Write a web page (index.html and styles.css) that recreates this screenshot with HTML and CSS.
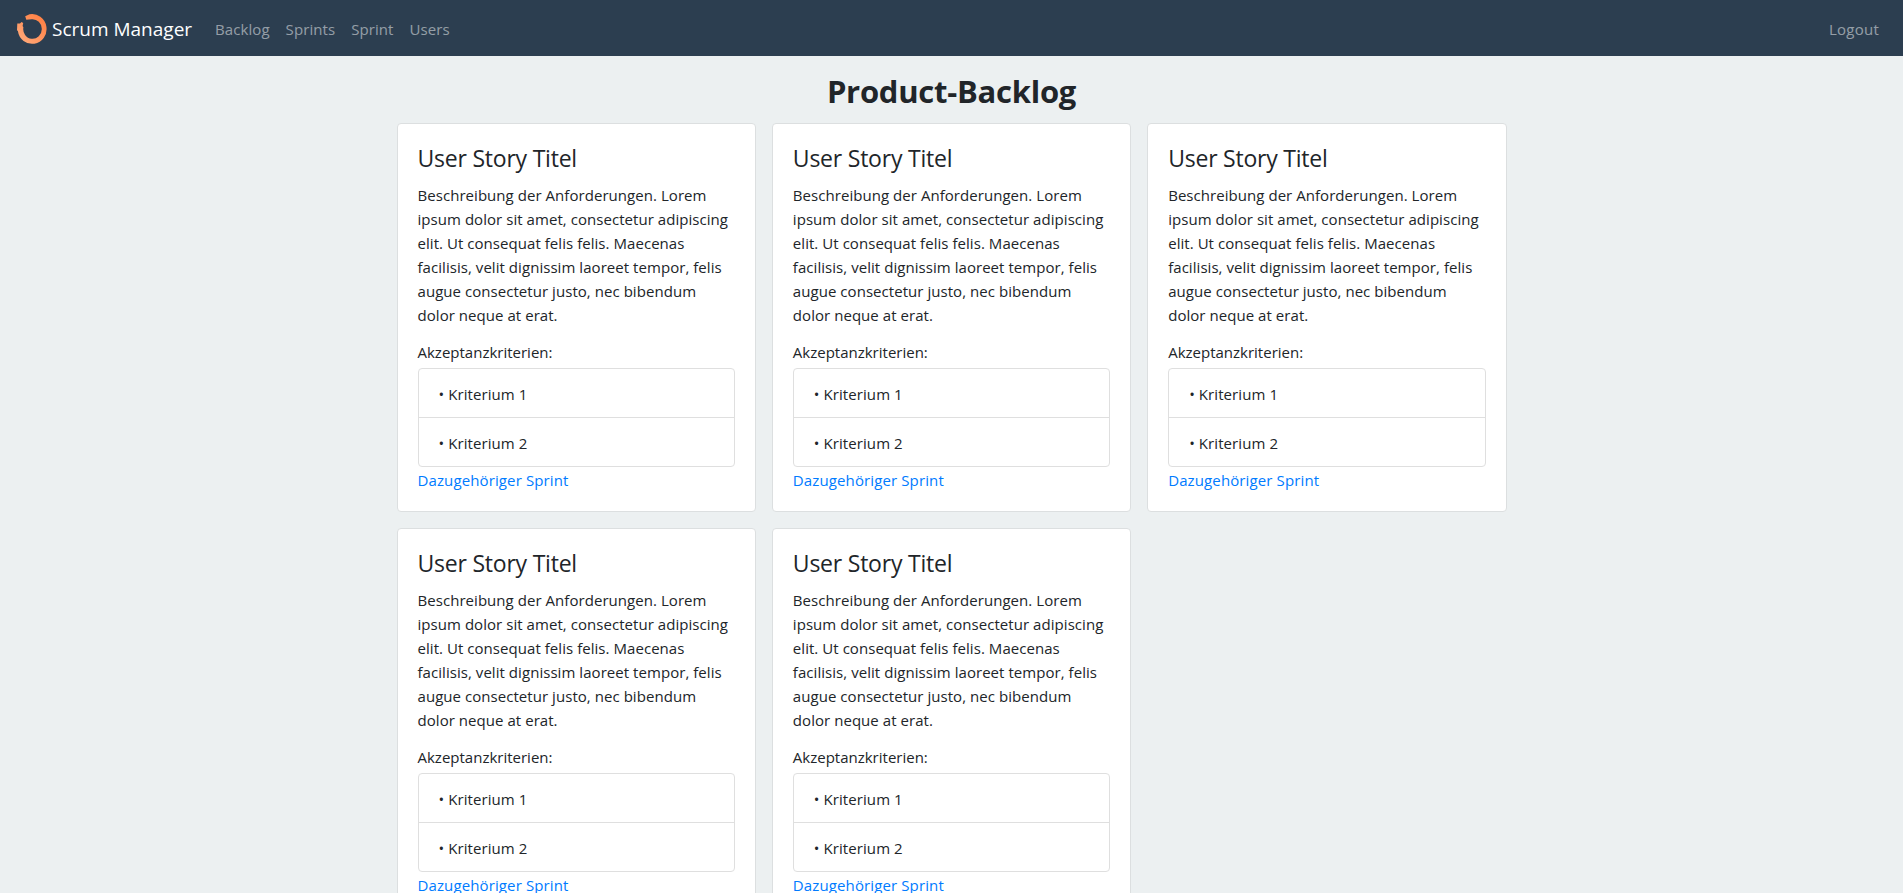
FILE: index.html
```html
<!DOCTYPE html>
<html lang="de">
<head>
<meta charset="utf-8">
<title>Scrum Manager</title>
<link rel="stylesheet" href="styles.css">
</head>
<body>
<nav class="navbar">
  <a class="brand" href="#">
    <svg class="logo" width="30" height="30" viewBox="0 0 30 30" aria-hidden="true">
      <defs>
        <linearGradient id="ring" x1="1" y1="0" x2="0" y2="1">
          <stop offset="0" stop-color="#ff7a3c"/>
          <stop offset="1" stop-color="#ffae80"/>
        </linearGradient>
      </defs>
      <path fill="url(#ring)" d="M8.200 2.200L12.500.300A14.400 14.900 0 1 1 .9 17L0 16.200L.3 9.400L3 9.600L4.500 8L6.200 9L5.600 12L6.400 13.200A9.300 9.800 0 1 0 14.700 5.300L9.300 5.700Z"/>
    </svg>
    <span class="brand-name">Scrum Manager</span>
  </a>
  <a class="nav-link" href="#">Backlog</a>
  <a class="nav-link" href="#">Sprints</a>
  <a class="nav-link" href="#">Sprint</a>
  <a class="nav-link" href="#">Users</a>
  <a class="nav-link logout" href="#">Logout</a>
</nav>
<main class="container">
  <h1 class="page-title">Product-Backlog</h1>
  <div class="stories">
    <article class="card">
      <h2 class="card-title">User Story Titel</h2>
      <p class="card-text">Beschreibung der Anforderungen. Lorem<br>ipsum dolor sit amet, consectetur adipiscing<br>elit. Ut consequat felis felis. Maecenas<br>facilisis, velit dignissim laoreet tempor, felis<br>augue consectetur justo, nec bibendum<br>dolor neque at erat.</p>
      <div class="label">Akzeptanzkriterien:</div>
      <ul class="criteria"><li>• Kriterium 1</li><li>• Kriterium 2</li></ul>
      <a class="sprint-link" href="#">Dazugehöriger Sprint</a>
    </article>
    <article class="card">
      <h2 class="card-title">User Story Titel</h2>
      <p class="card-text">Beschreibung der Anforderungen. Lorem<br>ipsum dolor sit amet, consectetur adipiscing<br>elit. Ut consequat felis felis. Maecenas<br>facilisis, velit dignissim laoreet tempor, felis<br>augue consectetur justo, nec bibendum<br>dolor neque at erat.</p>
      <div class="label">Akzeptanzkriterien:</div>
      <ul class="criteria"><li>• Kriterium 1</li><li>• Kriterium 2</li></ul>
      <a class="sprint-link" href="#">Dazugehöriger Sprint</a>
    </article>
    <article class="card">
      <h2 class="card-title">User Story Titel</h2>
      <p class="card-text">Beschreibung der Anforderungen. Lorem<br>ipsum dolor sit amet, consectetur adipiscing<br>elit. Ut consequat felis felis. Maecenas<br>facilisis, velit dignissim laoreet tempor, felis<br>augue consectetur justo, nec bibendum<br>dolor neque at erat.</p>
      <div class="label">Akzeptanzkriterien:</div>
      <ul class="criteria"><li>• Kriterium 1</li><li>• Kriterium 2</li></ul>
      <a class="sprint-link" href="#">Dazugehöriger Sprint</a>
    </article>
    <article class="card">
      <h2 class="card-title">User Story Titel</h2>
      <p class="card-text">Beschreibung der Anforderungen. Lorem<br>ipsum dolor sit amet, consectetur adipiscing<br>elit. Ut consequat felis felis. Maecenas<br>facilisis, velit dignissim laoreet tempor, felis<br>augue consectetur justo, nec bibendum<br>dolor neque at erat.</p>
      <div class="label">Akzeptanzkriterien:</div>
      <ul class="criteria"><li>• Kriterium 1</li><li>• Kriterium 2</li></ul>
      <a class="sprint-link" href="#">Dazugehöriger Sprint</a>
    </article>
    <article class="card">
      <h2 class="card-title">User Story Titel</h2>
      <p class="card-text">Beschreibung der Anforderungen. Lorem<br>ipsum dolor sit amet, consectetur adipiscing<br>elit. Ut consequat felis felis. Maecenas<br>facilisis, velit dignissim laoreet tempor, felis<br>augue consectetur justo, nec bibendum<br>dolor neque at erat.</p>
      <div class="label">Akzeptanzkriterien:</div>
      <ul class="criteria"><li>• Kriterium 1</li><li>• Kriterium 2</li></ul>
      <a class="sprint-link" href="#">Dazugehöriger Sprint</a>
    </article>
  </div>
</main>
</body>
</html>
```
FILE: styles.css
```css
* { box-sizing: border-box; }
html { height: 100%; overflow: hidden; }
body {
  margin: 0;
  height: 100%;
  overflow: hidden;
  background: #ecf0f1;
  color: #212529;
  font-family: "Open Sans", "Noto Sans", sans-serif;
  font-size: 15px;
  line-height: 24px;
}
a { text-decoration: none; }
.navbar {
  display: flex;
  align-items: center;
  height: 56px;
  padding: 1px 16px 0;
  background: #2c3e50;
}
.brand {
  display: flex;
  align-items: center;
  width: 191px;
  color: #fff;
  font-size: 19px;
}
.logo { margin: 0 5px 0 1px; }
.nav-link {
  padding: 0 8px;
  color: rgba(255, 255, 255, .5);
  letter-spacing: .08px;
}
.logout {
  margin-left: auto;
  letter-spacing: .25px;
}
.container {
  width: 1140px;
  margin: 0 auto;
  padding: 0 15px;
}
.page-title {
  margin: 0;
  padding-top: 16px;
  height: 67px;
  font-size: 31px;
  line-height: 38px;
  font-weight: 700;
  letter-spacing: -.25px;
  text-align: center;
}
.stories {
  display: grid;
  grid-template-columns: repeat(3, 1fr);
  gap: 16px;
}
.card {
  height: 389px;
  padding: 20px;
  background: #fff;
  border: 1px solid #dcdfe0;
  border-radius: 4px;
}
.card-title {
  margin: 0 0 11px;
  font-size: 23px;
  line-height: 28px;
  font-weight: 400;
  letter-spacing: -.22px;
}
.card-text {
  margin: 0 0 13px;
  letter-spacing: .05px;
  white-space: nowrap;
}
.label { margin-bottom: 4px; }
.criteria {
  margin: 0 0 1px;
  padding: 0;
  list-style: none;
  border: 1px solid #dfdfdf;
  border-radius: 4px;
}
.criteria li {
  padding: 13px 20px 11px;
  letter-spacing: .08px;
}
.criteria li + li { border-top: 1px solid #dfdfdf; }
.sprint-link {
  color: #007bff;
  letter-spacing: .12px;
}
```
